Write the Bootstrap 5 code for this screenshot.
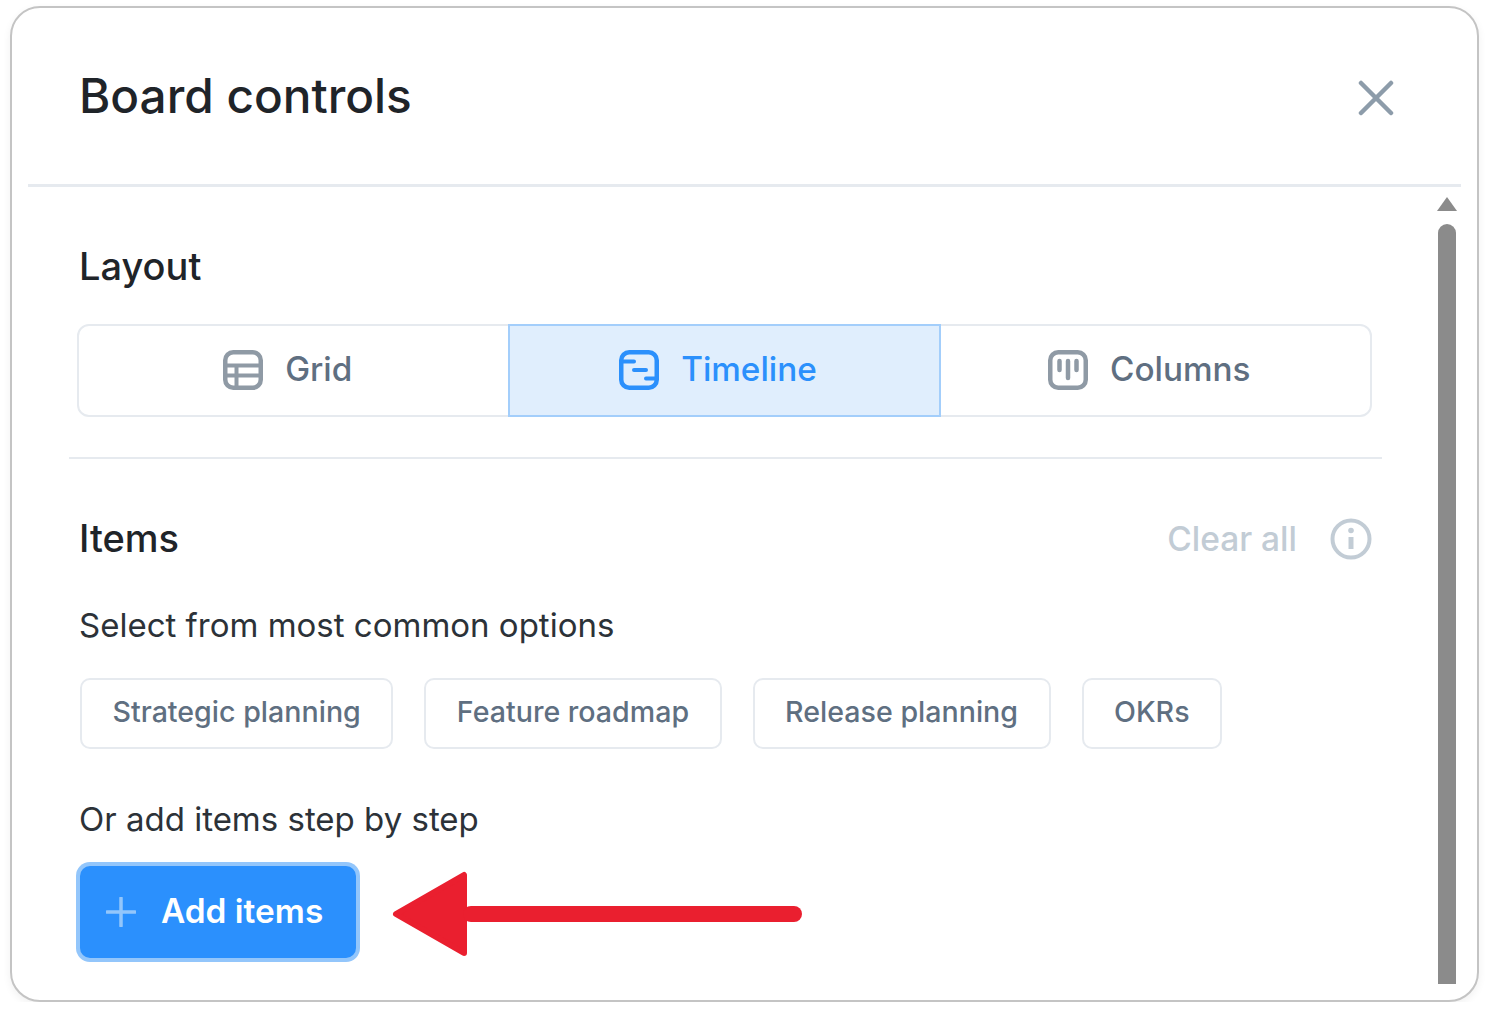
<!DOCTYPE html>
<html lang="en">
<head>
<meta charset="UTF-8">
<meta name="viewport" content="width=device-width, initial-scale=1.0">
<title>Board controls</title>
<link rel="stylesheet" href="https://cdn.jsdelivr.net/npm/bootstrap@5.3.0/dist/css/bootstrap.min.css">
<style>
    body { background: #fff; font-family: Inter, "Liberation Sans", sans-serif; color: #1f2429; }
    .board-dialog { position: relative; width: 1469px; height: 996px; margin: 6px 0 0 10px; padding: 0 16px; border: 2px solid #c4c4c4; border-radius: 30px; background: #fff; box-shadow: 0 3px 8px rgba(0,0,0,.06); }
    .dialog-head { height: 179px; border-bottom: 3px solid #e6eaef; padding: 0 67px 0 51px; }
    .dialog-title { font-size: 47.7px; font-weight: 500; margin: 2px 0 0; line-height: 1; }
    .close-x { background: none; border: 0; padding: 0; line-height: 0; margin-top: 4px; }
    .dialog-scroll { height: 797px; }
    .dialog-main { width: 1409px; padding: 0 65px 0 49px; }
    .sec-title { font-size: 38px; font-weight: 500; line-height: 42px; padding-bottom: 2px; margin: 0; }
    .layout-title { margin: 58px 0 35px 2px; }
    .seg-group { height: 93px; border: 2px solid #e6eaef; border-radius: 12px; }
    .seg-item { flex: 1 1 0; gap: 22px; padding: 0 12px 2px 0; font-size: 33.3px; font-weight: 500; color: #5f6f81; }
    .seg-on { flex: 0 0 433px; margin: -2px 0 -2px -1px; background: #e0eefd; color: #2b90fc; border: 2px solid #a3cefb; }
    .thin-rule { height: 2px; background: #e6eaef; margin: 40px -10px 0 -8px; }
    .items-head { margin: 55px 0 0 2px; }
    .clear-link { font-size: 33.5px; font-weight: 500; color: #c2ccd5; margin-right: 33px; }
    .help-text { font-size: 33px; line-height: 44px; margin: 0 0 0 2px; color: #2c3238; }
    .help-first { margin-top: 39px; }
    .chip-row { gap: 31px; margin: 31px 0 48px 3px; }
    .chip-btn { height: 71px; padding: 0 30.5px 2px; border: 2px solid #e6eaef; border-radius: 10px; background: #fff; color: #5f6f81; font-size: 28.6px; font-weight: 500; }
    .add-btn { width: 276px; height: 92px; margin: 25px 0 0 3px; padding: 0 0 0 26px; gap: 25px; border: 0; border-radius: 10px; background: #2b90fd; color: #fff; font-size: 33.4px; font-weight: 600; box-shadow: 0 0 0 4px #93c6fb; }
    .add-label { padding-bottom: 3px; }
    .scroll-rail { width: 20px; padding-top: 10px; }
    .scroll-up { width: 0; height: 0; border-left: 10px solid transparent; border-right: 10px solid transparent; border-bottom: 14px solid #8b8b8b; margin-bottom: 13px; }
    .scroll-thumb { width: 18px; height: 760px; background: #8b8b8b; border-radius: 9px 9px 0 0; }
    .red-arrow { position: absolute; left: 379px; top: 862px; }
</style>
</head>
<body>
<div class="board-dialog">
    <div class="dialog-head d-flex align-items-center justify-content-between">
        <h1 class="dialog-title">Board controls</h1>
        <button class="close-x" type="button" aria-label="Close">
            <svg width="36" height="36" viewBox="0 0 36 36" fill="none" stroke="#8d9caa" stroke-width="4.5" stroke-linecap="round"><path d="M3 3 33 33M33 3 3 33"/></svg>
        </button>
    </div>
    <div class="dialog-scroll d-flex">
        <div class="dialog-main">
            <h2 class="sec-title layout-title">Layout</h2>
            <div class="seg-group d-flex">
                <div class="seg-item d-flex align-items-center justify-content-center">
                    <svg width="40" height="40" viewBox="0 0 40 40" fill="none" stroke="#8f9aa5" stroke-width="4.5"><rect x="2.25" y="2.25" width="35.5" height="35.5" rx="8"/><path d="M2 15.5H38M2 25.5H38" stroke-width="4"/><path d="M13.5 15.5V38" stroke-width="4"/></svg>
                    <span>Grid</span>
                </div>
                <div class="seg-item seg-on d-flex align-items-center justify-content-center">
                    <svg width="40" height="40" viewBox="0 0 40 40" fill="none" stroke="#2b90fc" stroke-width="4.5"><rect x="2.25" y="2.25" width="35.5" height="35.5" rx="8"/><path d="M2 11.5H15M15 20H27M27 28.5H38" stroke-width="4" stroke-linecap="round"/></svg>
                    <span>Timeline</span>
                </div>
                <div class="seg-item d-flex align-items-center justify-content-center">
                    <svg width="40" height="40" viewBox="0 0 40 40" fill="none" stroke="#8f9aa5" stroke-width="4.5"><rect x="2.25" y="2.25" width="35.5" height="35.5" rx="8"/><path d="M11.5 11V20M20 11V28M28.5 11V20" stroke-width="4.5" stroke-linecap="round"/></svg>
                    <span>Columns</span>
                </div>
            </div>
            <div class="thin-rule"></div>
            <div class="items-head d-flex align-items-center justify-content-between">
                <h2 class="sec-title">Items</h2>
                <div class="d-flex align-items-center">
                    <span class="clear-link">Clear all</span>
                    <svg width="42" height="42" viewBox="0 0 42 42" fill="none" stroke="#c2ccd5" stroke-width="4"><circle cx="21" cy="21" r="18.5"/><path d="M21 19V31" stroke-width="5"/><circle cx="21" cy="12.5" r="2.8" fill="#c2ccd5" stroke="none"/></svg>
                </div>
            </div>
            <p class="help-text help-first">Select from most common options</p>
            <div class="chip-row d-flex">
                <button class="chip-btn" type="button">Strategic planning</button>
                <button class="chip-btn" type="button">Feature roadmap</button>
                <button class="chip-btn" type="button">Release planning</button>
                <button class="chip-btn" type="button">OKRs</button>
            </div>
            <p class="help-text">Or add items step by step</p>
            <button class="add-btn d-flex align-items-center" type="button">
                <svg width="30" height="30" viewBox="0 0 30 30" stroke="#93c6fb" stroke-width="3.5" stroke-linecap="round"><path d="M15 1V29M1 15H29"/></svg>
                <span class="add-label">Add items</span>
            </button>
        </div>
        <div class="scroll-rail d-flex flex-column align-items-center">
            <div class="scroll-up"></div>
            <div class="scroll-thumb"></div>
        </div>
    </div>
    <svg class="red-arrow" width="413" height="88" viewBox="0 0 413 88" fill="#ea1f2f" stroke="#ea1f2f" stroke-linejoin="round"><path d="M5 44 73 5V83Z" stroke-width="6"/><rect x="72" y="36" width="339" height="16" rx="8" stroke="none"/></svg>
</div>
</body>
</html>
